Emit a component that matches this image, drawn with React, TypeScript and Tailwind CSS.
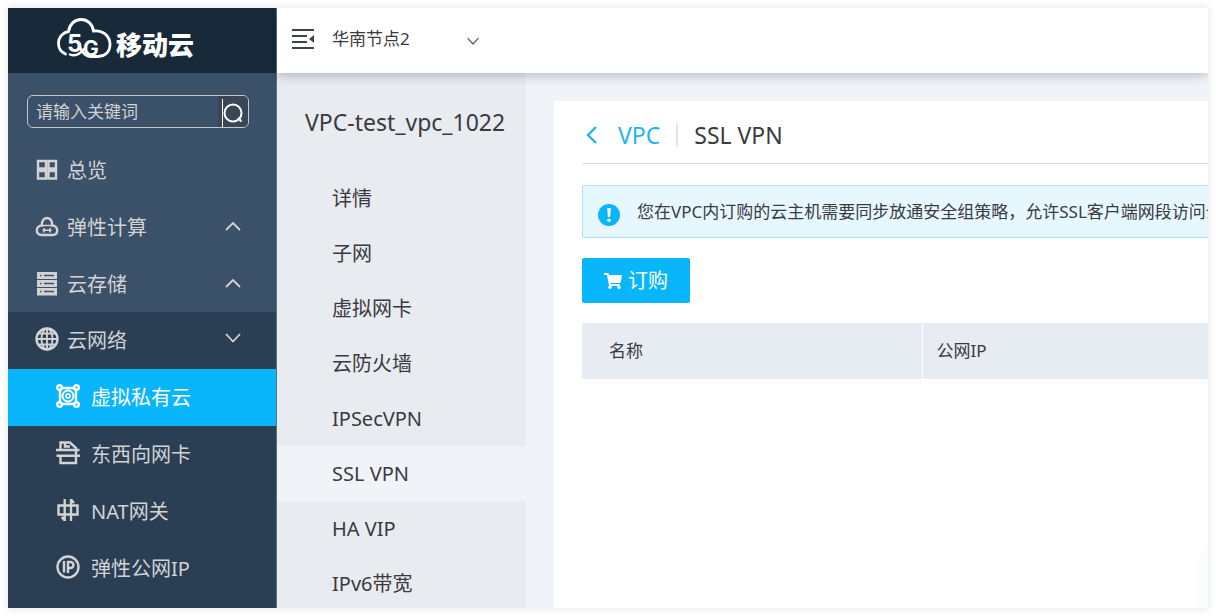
import { ReactNode, useState } from "react";
import { FaShoppingCart } from "react-icons/fa";

type MenuItem = {
	label: string;
	icon: ReactNode;
	open?: boolean;
};

const Chevron = ({ className, d }: { className: string; d: string }) => (
	<svg
		className={className}
		viewBox="0 0 18 18"
		fill="none"
		stroke="currentColor"
		strokeWidth="1.8"
	>
		<path d={d} />
	</svg>
);

const UP = "M2 12 9 5 16 12";
const DOWN = "M2 4 9 11.500 16 4";

const Icon = ({ children }: { children: ReactNode }) => (
	<svg
		className="h-6 w-6 shrink-0"
		viewBox="0 0 24 24"
		fill="none"
		stroke="currentColor"
		strokeWidth="2.4"
	>
		{children}
	</svg>
);

const Logo = () => (
	<svg className="h-11 w-14" viewBox="0 0 56 44" fill="none">
		<path
			d="M9.500 37C5 35 2.500 31 2.500 26.500C2.500 20 7 15.500 12.500 14.500C13.500 7.500 18.500 2.500 25 2.500C31.500 2.500 36.500 7 37.500 14C47 13 54 19 54 27.500C54 35 49 39.500 42 39.500H34C29.500 39.500 27 36 23 29"
			stroke="white"
			strokeWidth="2.800"
			strokeLinecap="round"
		/>
		<path
			d="M14 37.500C20 40 24 37 28 32"
			stroke="white"
			strokeWidth="2.400"
			strokeLinecap="round"
		/>
		<text
			x="11"
			y="35"
			fill="white"
			className="font-['Inter'] text-[24px] font-bold"
		>
			5
		</text>
		<text
			x="27"
			y="39"
			fill="white"
			className="font-['Inter'] text-[21px] font-bold"
		>
			G
		</text>
	</svg>
);

const topMenu: MenuItem[] = [
	{
		label: "总览",
		icon: (
			<Icon>
				<path d="M3 3h8v7.500H3zM13.500 3H21v7.500h-7.500zM3 13h8v7.500H3zM13.500 13H21v7.500h-7.500z" />
			</Icon>
		),
	},
	{
		label: "弹性计算",
		open: false,
		icon: (
			<Icon>
				<path d="M6.500 20C3.500 20 1.800 18 1.800 15.500C1.800 12.500 4 10.500 6.800 10.500C6.500 6.500 8.500 3 12 3C15.500 3 17.500 6.500 17.200 10.500C20 10.500 22.200 12.500 22.200 15.500C22.200 18 20.500 20 17.500 20Z" />
				<path
					d="M7.500 10.500h9M7.500 15.200h9M9 13v4.400M15 13v4.400"
					strokeWidth="1.600"
				/>
			</Icon>
		),
	},
	{
		label: "云存储",
		open: false,
		icon: (
			<Icon>
				<path
					d="M2 0h20v7H2zM2 8h20v7H2zM2 16h20v7.500H2z"
					fill="currentColor"
					stroke="none"
				/>
				<path
					d="M9 3.500h10M5 3.500h1.500M9 11.500h10M5 11.500h1.500M9 19.500h10M5 19.500h1.500"
					stroke="#3b5069"
					strokeWidth="1.600"
				/>
			</Icon>
		),
	},
];

const networkMenu: MenuItem[] = [
	{
		label: "虚拟私有云",
		icon: (
			<Icon>
				<path d="M4 6v12M20 6v12M6 4h12M6 20h12" />
				<circle cx="12" cy="12" r="5.500" strokeWidth="2" />
				<circle cx="12" cy="12" r="2" strokeWidth="1.600" />
				<circle cx="3.500" cy="3.500" r="2.300" fill="#09b6fc" />
				<circle cx="20.500" cy="3.500" r="2.300" fill="#09b6fc" />
				<circle cx="3.500" cy="20.500" r="2.300" fill="#09b6fc" />
				<circle cx="20.500" cy="20.500" r="2.300" fill="#09b6fc" />
			</Icon>
		),
	},
	{
		label: "东西向网卡",
		icon: (
			<Icon>
				<path d="M4.500 9V1.500h9.500L20 7v15H4.500v-7.500M0 9h20M0.500 14.800H24M20 9h3.500M9 2v3.500h5" />
			</Icon>
		),
	},
	{
		label: "NAT网关",
		icon: (
			<Icon>
				<path d="M8.700 1v22M15 1v22M2.500 7.500h19v9h-19zM15 1.500 18 5M8.700 22.500 5.700 19" />
			</Icon>
		),
	},
	{
		label: "弹性公网IP",
		icon: (
			<Icon>
				<circle cx="12" cy="12" r="10.500" />
				<path d="M8 6v11.500M12 18V7h2.500a3 3 0 0 1 0 6h-2.500" />
			</Icon>
		),
	},
];

const vpcMenu = [
	"详情",
	"子网",
	"虚拟网卡",
	"云防火墙",
	"IPSecVPN",
	"SSL VPN",
	"HA VIP",
	"IPv6带宽",
];

const Sidebar = () => {
	const [keyword, setKeyword] = useState<string>("");

	return (
		<aside className="flex w-[269px] shrink-0 flex-col border-r border-[#5c7088] bg-[#3b5069] text-[#d3d3d3]">
			<a
				href="#"
				className="flex h-[65px] shrink-0 items-center bg-[#182a3a] pb-1 pl-12 text-white"
			>
				<Logo />
				<span className="pl-1 pt-3 text-[26px] font-black leading-8">
					移动云
				</span>
			</a>
			<form
				className="mx-[19px] mb-[13px] mt-[22px] flex h-[33px] w-[222px] shrink-0 overflow-hidden rounded-md border border-[#c4c8cc]"
				onSubmit={(e) => e.preventDefault()}
			>
				<input
					className="min-w-0 flex-1 pl-2 text-[17px] leading-6 outline-none placeholder:text-[#d3d3d3]"
					type="text"
					aria-label="请输入关键词"
					placeholder="请输入关键词"
					value={keyword}
					onChange={(e) => setKeyword(e.target.value)}
				/>
				<button
					className="flex w-[30px] items-center justify-end bg-[#3a4655] text-white"
					type="submit"
					aria-label="搜索"
				>
					<svg
						className="h-[30px] w-[26px]"
						viewBox="0 0 26 30"
						fill="none"
						stroke="currentColor"
					>
						<path d="M.5 2v28" />
						<circle cx="11" cy="16" r="8.500" strokeWidth="2" />
						<path d="m16 21 3.500 3.500" strokeWidth="2.200" />
					</svg>
				</button>
			</form>

			<nav className="flex flex-1 flex-col text-xl">
				{topMenu.map((i) => (
					<a
						key={i.label}
						href="#"
						className="flex h-[57px] shrink-0 items-center pl-[27px] pr-[34px]"
					>
						{i.icon}
						<span className="flex-1 pl-2 pt-0.5">{i.label}</span>
						{i.open === false && (
							<Chevron className="h-[18px] w-[18px]" d={UP} />
						)}
					</a>
				))}
				<div className="flex-1 bg-[#2a3f54]">
					<a
						href="#"
						className="flex h-[57px] items-center pb-1 pl-[27px] pr-[34px]"
					>
						<Icon>
							<circle cx="12" cy="12" r="10.500" />
							<ellipse cx="12" cy="12" rx="5.500" ry="10.500" strokeWidth="1.800" />
							<path d="M12 1v22M1 12h22M3 6.500h18M3 17.500h18" strokeWidth="1.800" />
						</Icon>
						<span className="flex-1 pl-2 pt-1">云网络</span>
						<Chevron className="h-[18px] w-[18px]" d={DOWN} />
					</a>
					{networkMenu.map((i, idx) => (
						<a
							key={i.label}
							href="#"
							className={`flex h-[57px] items-center pb-1 pl-12 ${
								idx === 0 ? "bg-[#09b6fc] text-white" : ""
							}`}
						>
							{i.icon}
							<span className="pl-[11px] pt-1">{i.label}</span>
						</a>
					))}
				</div>
			</nav>
		</aside>
	);
};

const Header = () => (
	<header className="relative z-10 flex h-[65px] shrink-0 items-center bg-white pb-1 pl-[15px] shadow-[0_3px_10px_rgba(0,0,0,0.22)]">
		<button type="button" aria-label="收起菜单" className="text-[#3c444c]">
			<svg
				className="h-[22px] w-[23px]"
				viewBox="0 0 23 22"
				fill="none"
				stroke="currentColor"
				strokeWidth="1.800"
			>
				<path d="M0 2h22M0 8h15M0 14h15M0 20h22" />
				<path d="M22 7v8l-5-4z" fill="currentColor" stroke="none" />
			</svg>
		</button>
		<div className="relative ml-[17px] w-[148px]">
			<select
				aria-label="节点"
				className="w-full appearance-none bg-transparent text-[17px] leading-7 outline-none"
			>
				<option>华南节点2</option>
			</select>
			<Chevron
				className="pointer-events-none absolute right-0 top-2.5 h-[14px] w-[14px] text-[#5a6268]"
				d={DOWN}
			/>
		</div>
	</header>
);

const VpcNav = () => (
	<nav className="w-[249px] shrink-0 bg-[#e8ebf0] text-xl">
		<h2 className="flex h-[98px] items-center pl-7 text-[23px]">
			VPC-test_vpc_1022
		</h2>
		{vpcMenu.map((i) => (
			<a
				key={i}
				href="#"
				className={`flex h-[55px] items-center pl-[55px] ${
					i === "SSL VPN" ? "bg-[#f0f4f8]" : ""
				}`}
			>
				{i}
			</a>
		))}
	</nav>
);

const App = () => {
	return (
		<div className="h-screen bg-white p-2 font-['Noto_Sans','Noto_Sans_CJK_SC',sans-serif] text-[#3a3a3f]">
			<div className="relative flex h-full overflow-hidden shadow-[0_0_8px_rgba(0,0,0,0.12)]">
				<Sidebar />
				<div className="flex min-w-0 flex-1 flex-col">
					<Header />
					<div className="flex min-h-0 flex-1 bg-[#f0f4f8]">
						<VpcNav />
						<main className="min-w-0 flex-1 pl-7 pt-7">
							<section className="h-full bg-white pl-7">
								<div className="flex h-[63px] items-center border-b border-[#d9dfe2] pt-1.5 text-[23px]">
									<a href="#" className="flex items-center text-[#1db5f5]">
										<svg
											className="h-5 w-5"
											viewBox="0 0 20 20"
											fill="none"
											stroke="currentColor"
											strokeWidth="2.400"
										>
											<path d="M14 2 6 10l8 8" />
										</svg>
										<span className="pl-4">VPC</span>
									</a>
									<span className="mx-4 h-6 w-0.5 bg-[#dfe6ea]" />
									<h1>SSL VPN</h1>
								</div>

								<div className="mt-[21px] flex h-[53px] items-center overflow-hidden rounded-l-xs border border-r-0 border-[#abe2f7] bg-[#e6f7ff] pl-[14px]">
									<svg className="mt-1.5 h-6 w-6 shrink-0" viewBox="0 0 24 24">
										<circle cx="12" cy="12" r="11" fill="#09b6fc" />
										<path d="M10.200 5h3.600l-.7 9h-2.200z" fill="white" />
										<circle cx="12" cy="17.300" r="1.800" fill="white" />
									</svg>
									<p className="whitespace-nowrap pl-4 text-[17px]">
										您在VPC内订购的云主机需要同步放通安全组策略，允许SSL客户端网段访问云
									</p>
								</div>

								<button
									type="button"
									className="mt-5 flex h-[45px] w-[108px] items-center justify-center gap-1.5 rounded-xs bg-[#09b6fc] text-xl text-white"
								>
									<FaShoppingCart className="h-[18px] w-[18px]" />
									订购
								</button>

								<table className="mt-5 w-full table-fixed text-left text-[17px]">
									<thead>
										<tr className="h-14 bg-[#e7ebf2]">
											<th className="w-[340px] border-r border-white pl-[27px] font-normal">
												名称
											</th>
											<th className="pl-[14px] font-normal">公网IP</th>
										</tr>
									</thead>
								</table>
							</section>
						</main>
					</div>
				</div>
				{/* floating helper bubble, mostly off the edge */}
				<div className="pointer-events-none absolute -bottom-11 -right-[123px] h-[136px] w-[136px] rounded-full bg-[#fbfdfd]" />
			</div>
		</div>
	);
};

export default App;
